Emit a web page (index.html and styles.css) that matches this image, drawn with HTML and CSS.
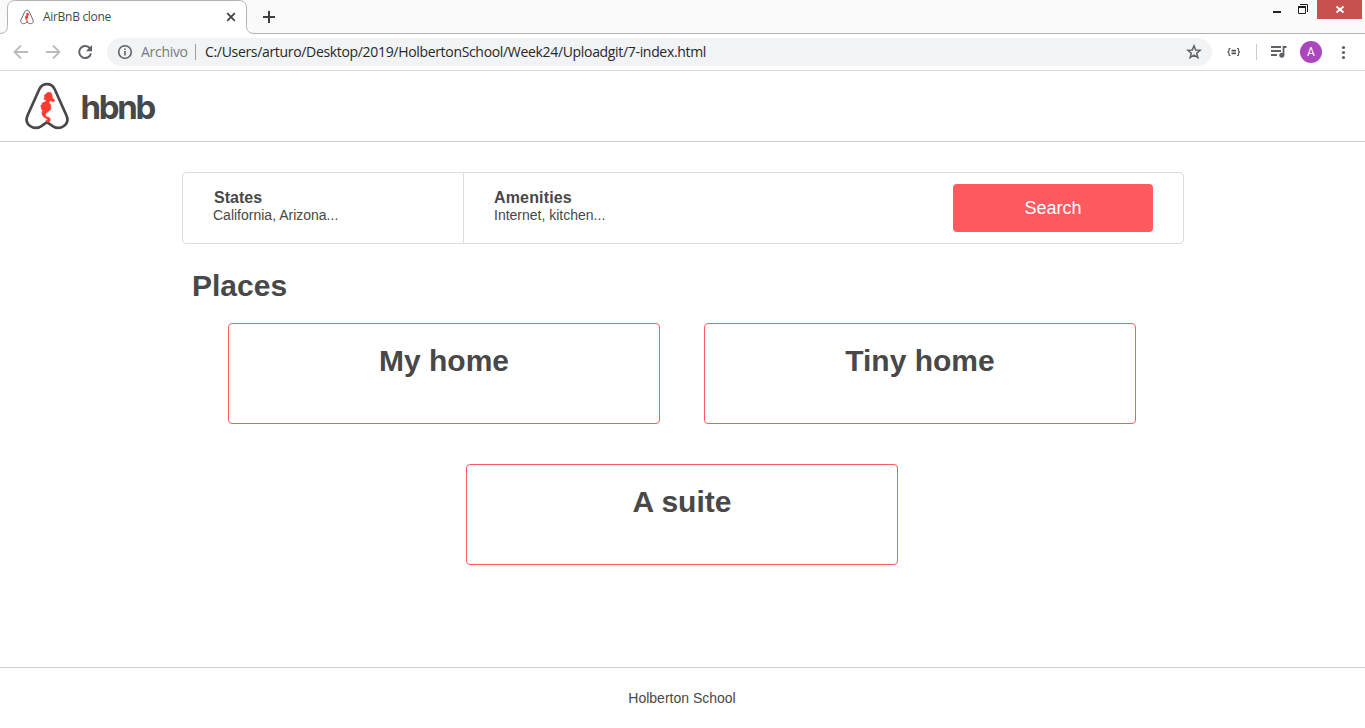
FILE: index.html
```html
<!DOCTYPE html>
<html lang="es">
<head>
<meta charset="utf-8">
<title>AirBnB clone</title>
<link rel="stylesheet" href="styles.css">
</head>
<body>
<svg class="defs" width="0" height="0" aria-hidden="true">
  <symbol id="logo" viewBox="0 0 50 52">
    <path class="logo-frame" d="M25 42.200L19 46.300C11.500 50.800 2 44.500 5.300 36L17.300 9.300C20.500 2.500 29.500 2.500 32.700 9.300L44.700 36C48 44.500 38.500 50.800 31 46.300Z"/>
    <path class="logo-horse" d="M22.200 15.500L24.200 13.500L26.200 12.300L29.200 12.800L30 15.500L30.500 18L32.700 20.200L31.800 21.700L28.600 20.700L27 21.800L27.200 23.200L28.700 25L28.900 28C28.500 31 25 31.800 23.600 33.800C23.200 35.500 24 36.600 25.400 37C28.200 37.400 29 39.500 27.800 41.300C26.500 42.800 24 42.300 23.900 40.200L25.600 40.500C26 39 23 38.300 21.300 36.600C19.800 34.800 19.600 32.500 20.600 30.200L19.100 28.700L19.600 27.200L18.500 26L20 24.800L20.200 22.900L22.600 22.300L24.400 20.200L21.800 19.300L22.700 17.200Z"/>
  </symbol>
</svg>
<div class="tabstrip">
  <svg class="tab-shape" width="260" height="34" viewBox="0 0 260 34"><path d="M-1 33.5C5 33.5 7.5 31 7.5 25.5V8.500C7.500 3 10 .5 15.500 .5H238.500C244 .5 246.500 3 246.500 8.500V25.500C246.500 31 249 33.500 255 33.500H260V35H-1Z"/></svg>
  <svg class="favicon"><use href="#logo"/></svg>
  <span class="tab-title">AirBnB clone</span>
  <svg class="tab-close" width="10" height="10" viewBox="0 0 10 10"><path d="M1.200 1.200L8.800 8.800M8.800 1.200L1.200 8.800"/></svg>
  <svg class="tab-new" width="14" height="14" viewBox="0 0 14 14"><path d="M7 1V13M1 7H13"/></svg>
  <div class="window-buttons">
    <svg width="88" height="20" viewBox="0 0 88 20">
      <path class="close-bg" d="M40 0H85V19H40Z"/>
      <path class="win-fill" d="M-4 11H4V13H-4Z"/>
      <path class="win-line" d="M21.500 6.500H28.500V13.500H21.500ZM23 4.500H30.500V12"/>
      <path class="win-fill" d="M21 6H29V8H21Z"/>
      <path class="win-x" d="M59.500 6.500L66.500 12.500M66.500 6.500L59.500 12.500"/>
    </svg>
  </div>
</div>
<div class="toolbar">
  <svg class="nav" width="106" height="36" viewBox="0 0 106 36">
    <path class="arrow" d="M28 18H15M21 11.500L14.500 18L21 24.500M46 18H59M53 11.500L59.500 18L53 24.500"/>
    <path class="reload" d="M90 14.400A6 6 0 1 0 91 19.500"/>
    <path class="reload-tip" d="M92 11V17.200H85.800Z"/>
  </svg>
  <div class="address">
    <svg class="info" width="16" height="16" viewBox="0 0 16 16"><circle cx="8" cy="8" r="6.300"/><path d="M8 7V11.500M8 4.500V6"/></svg>
    <span class="scheme">Archivo</span>
    <span class="bar"></span>
    <span class="url">C:/Users/arturo/Desktop/2019/HolbertonSchool/Week24/Uploadgit/7-index.html</span>
    <svg class="star" width="16" height="16" viewBox="0 0 16 16"><path d="M8 1.800L9.700 6L14.200 6.300L10.700 9.200L11.900 13.700L8 11.200L4.100 13.700L5.300 9.200L1.800 6.300L6.300 6Z"/></svg>
  </div>
  <svg class="tools" width="153" height="36" viewBox="1212 34 153 36">
    <path class="ext" d="M1230.500 48.500H1229.700Q1229 48.500 1229 49.300V50.800L1228 52L1229 53.200V54.700Q1229 55.500 1229.700 55.500H1230.500M1237 48.500H1237.800Q1238.500 48.500 1238.500 49.300V50.800L1239.500 52L1238.500 53.200V54.700Q1238.500 55.500 1237.800 55.500H1237M1231.500 50.300H1236M1231.500 52H1236M1231.500 53.700H1236"/>
    <path class="sep" d="M1256.500 44V60"/>
    <path class="music" d="M1271 47H1281M1271 51H1281M1271 55H1277M1283.500 55V47H1286.500"/>
    <circle class="dot" cx="1281.800" cy="55.300" r="2.500"/>
    <circle class="avatar" cx="1311" cy="52" r="11"/>
    <text class="avatar-letter" x="1311" y="56">A</text>
    <circle class="dot" cx="1343.500" cy="47.500" r="1.600"/><circle class="dot" cx="1343.500" cy="52.500" r="1.600"/><circle class="dot" cx="1343.500" cy="57.500" r="1.600"/>
  </svg>
</div>
<header class="header">
  <svg class="brand" width="50" height="52"><use href="#logo"/></svg>
  <span class="brand-name">hbnb</span>
</header>
<main class="container">
  <section class="filters">
    <div class="filter states"><h3>States</h3><h4>California, Arizona...</h4></div>
    <div class="filter"><h3>Amenities</h3><h4>Internet, kitchen...</h4></div>
    <button class="search">Search</button>
  </section>
  <h1 class="heading">Places</h1>
  <section class="places">
    <article class="place"><h2>My home</h2></article>
    <article class="place"><h2>Tiny home</h2></article>
    <article class="place"><h2>A suite</h2></article>
  </section>
</main>
<footer class="footer">Holberton School</footer>
</body>
</html>
```
FILE: styles.css
```css
* { box-sizing: border-box; }
body { margin: 0; width: 1365px; height: 728px; overflow: hidden; display: flex; flex-direction: column; background: #fff; color: #484848; font: 14px/16px "Liberation Sans", Arial, sans-serif; }
svg { display: block; flex: none; fill: none; }
.defs { position: absolute; }
h1, h2, h3, h4 { margin: 0; }
.logo-frame { stroke: #484848; stroke-width: 2.700; }
.logo-horse { fill: #fb3b2f; stroke: #fb3b2f; stroke-width: .6; }

.tabstrip { position: relative; display: flex; flex: none; height: 34px; background: #fafafa; border-bottom: 1px solid #b2b2b2; }
.tab-shape { position: absolute; left: 0; top: 0; }
.tab-shape path { fill: #fff; stroke: #b2b2b2; }
.favicon { position: relative; width: 16px; height: 16px; margin: 9px 0 0 19px; }
.tab-title { position: relative; margin-left: 8px; width: 183px; line-height: 34px; font-family: "Open Sans", sans-serif; font-size: 12px; letter-spacing: -.3px; color: #45494d; }
.tab-close { position: relative; margin-top: 12px; }
.tab-close path { stroke: #3c4043; stroke-width: 1.700; }
.tab-new { position: relative; margin: 10px 0 0 26px; }
.tab-new path { stroke: #3c4043; stroke-width: 2; }
.window-buttons { margin-left: auto; }
.window-buttons svg { overflow: visible; }
.close-bg { fill: #c75050; }
.win-fill { fill: #222; }
.win-line { stroke: #222; }
.win-x { stroke: #fff; stroke-width: 1.800; }

.toolbar { display: flex; flex: none; align-items: center; height: 37px; border-bottom: 1px solid #d9d9d9; }
.arrow { stroke: #babcbe; stroke-width: 1.800; }
.reload { stroke: #5f6368; stroke-width: 2; }
.reload-tip { fill: #5f6368; }
.address { display: flex; align-items: center; width: 1105px; height: 28px; margin-left: 1px; padding: 0 10px; border-radius: 14px; background: #f1f3f4; font: 14px/28px "Open Sans", sans-serif; }
.info { stroke: #5f6368; stroke-width: 1.600; }
.scheme { width: 54px; padding-left: 8px; color: #777b7f; white-space: nowrap; flex: none; letter-spacing: -.3px; }
.bar { width: 1px; height: 16px; margin: 0 9px 0 8px; background: #9aa0a6; }
.url { color: #26292c; letter-spacing: -.325px; white-space: nowrap; }
.star { margin-left: auto; stroke: #5f6368; stroke-width: 1.500; }
.ext { stroke: #555; stroke-width: 1.200; }
.sep { stroke: #ccc; }
.music { stroke: #5f6368; stroke-width: 1.800; }
.dot { fill: #5f6368; }
.avatar { fill: #ab47bc; }
.avatar-letter { fill: #fff; font: 400 12px Roboto, sans-serif; text-anchor: middle; }

.header { display: flex; flex: none; height: 71px; padding: 9px 0 0 22px; border-bottom: 1px solid #ccc; }
.brand-name { margin: 4px 0 0 8.500px; font: 700 33px/46px Inter, sans-serif; letter-spacing: -2.300px; }
.container { width: 1002px; margin: 30px auto 0 182px; flex: 1; }
.filters { display: flex; height: 72px; border: 1px solid #ddd; border-radius: 4px; }
.filter { padding: 15px 0 0 30px; }
.states { width: 281px; border-right: 1px solid #ddd; }
.filter h3 { font-size: 16px; line-height: 19px; letter-spacing: .15px; }
.states h3 { padding-left: 1px; letter-spacing: 0; }
.filter h4 { font-size: 14px; line-height: 16px; font-weight: 400; }
.search { width: 200px; height: 48px; margin: 11px 30px 0 auto; border: 0; border-radius: 4px; background: #ff5a5f; color: #fff; font: 18px "Liberation Sans", Arial, sans-serif; }
.heading { margin: 23px 0 0 10px; font-size: 30px; line-height: 38px; }
.places { display: flex; flex-wrap: wrap; justify-content: center; gap: 40px 44px; margin-top: 18px; padding-right: 2px; }
.place { width: 432px; height: 101px; padding-top: 18px; border: 1px solid #ff5a5f; border-radius: 4px; text-align: center; }
.place h2 { font-size: 30px; line-height: 38px; }
.footer { flex: none; height: 61px; padding-right: 1px; border-top: 1px solid #ccc; text-align: center; line-height: 61px; }
```
